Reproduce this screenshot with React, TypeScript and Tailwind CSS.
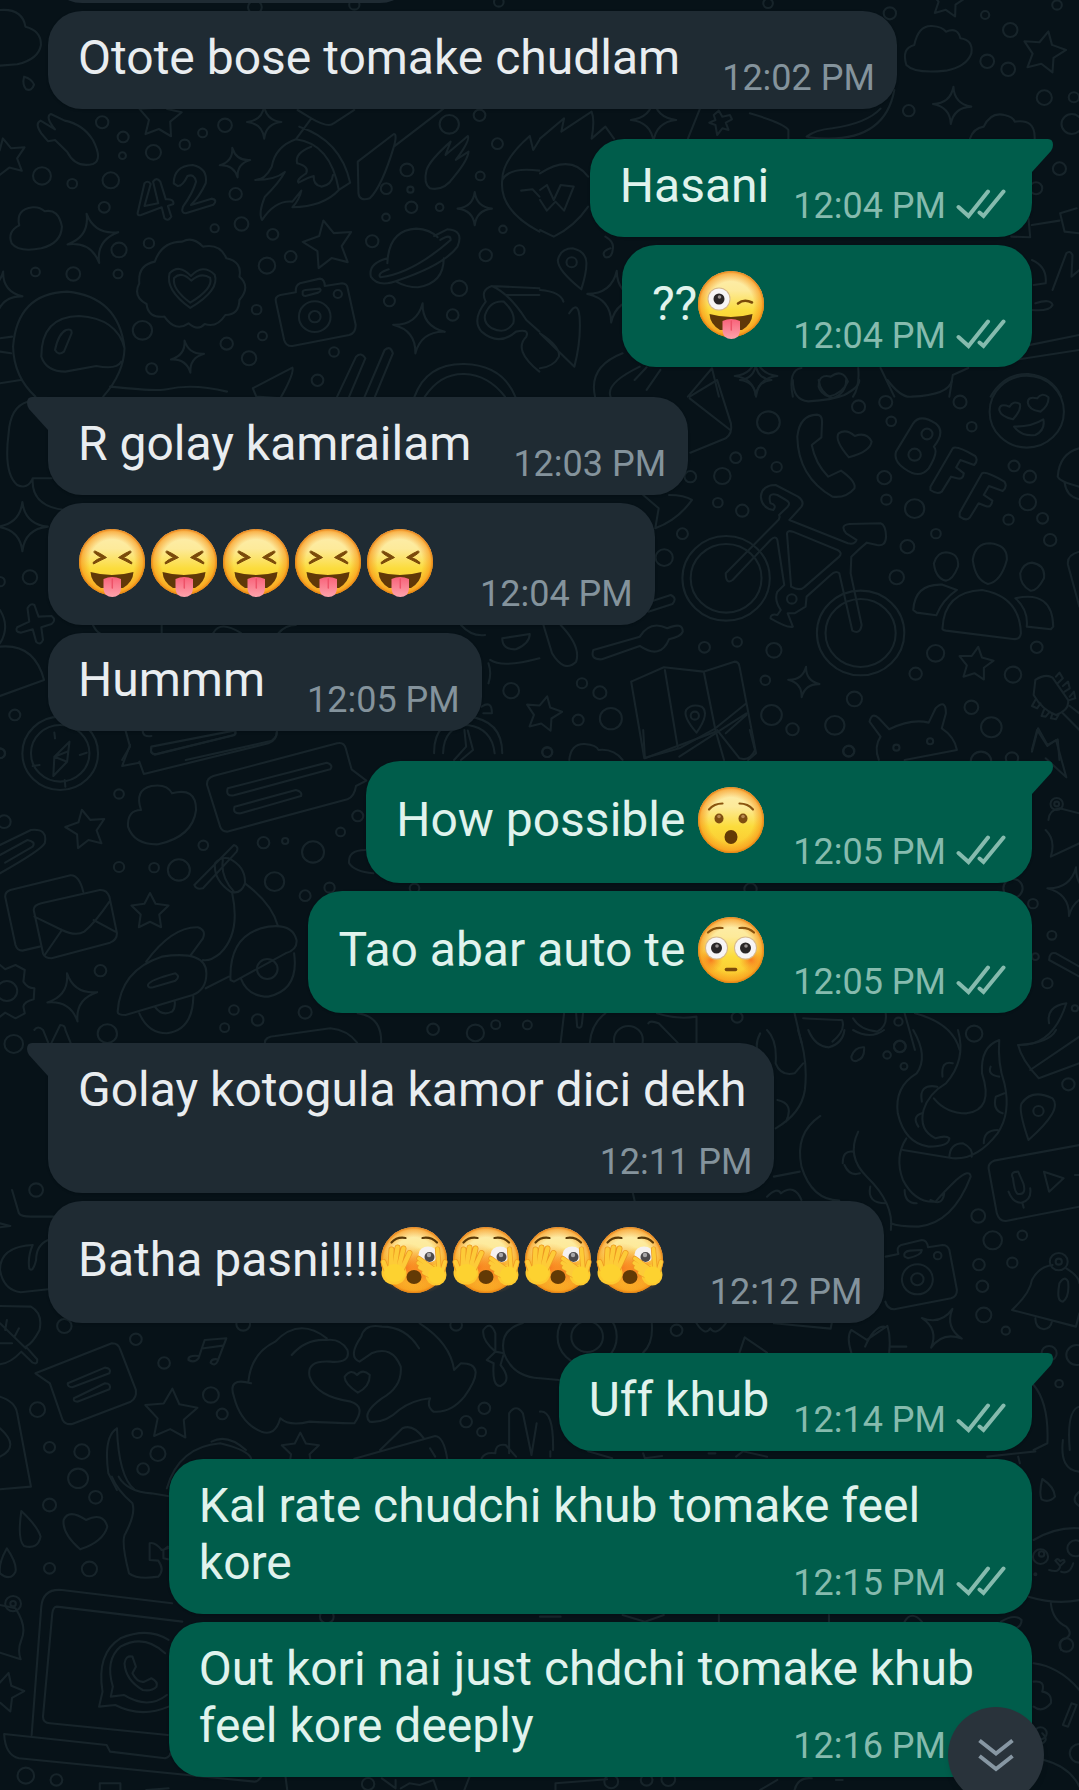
import React from "react";

type Dot = [number, number, number];
type Shape = [number, number, number, number];

interface Patch {
  at: [number, number];
  dots?: Dot[];
  stars?: Shape[];
  sparks?: Shape[];
  paths?: string[];
}

const STAR = "M0-10L3-4L10-3L5 2L6 9L0 6L-6 9L-5 2L-10-3L-3-4Z";
const SPARK = "M0-10Q1-1 10 0Q1 1 0 10Q-1 1-10 0Q-1-1 0-10Z";

// Wallpaper line art, grouped in tiles that are drawn at three times their size.
const wallpaper: Patch[] = [
  {
    at: [0, 0],
    dots: [
      [297, 367, 18], [358, 411, 16], [356, 467, 10], [446, 457, 22], [537, 434, 15], [589, 399, 13],
      [654, 376, 20], [122, 528, 26], [210, 551, 14], [322, 541, 24], [303, 622, 16], [685, 582, 18],
      [702, 672, 20], [624, 685, 12], [433, 730, 15], [346, 750, 22], [343, 822, 13], [213, 822, 20],
      [103, 816, 13], [793, 703, 16], [776, 797, 24], [845, 770, 17], [746, 929, 14], [763, 1008, 13],
      [659, 1031, 18], [724, 1075, 21], [414, 991, 28], [441, 1106, 16], [971, 1056, 14], [923, 1141, 17],
      [1306, 373, 28], [1394, 346, 17], [1446, 431, 16], [1183, 510, 19], [1123, 566, 16], [1193, 569, 9],
      [1196, 622, 17], [1278, 622, 11], [1396, 528, 13], [1122, 652, 11], [1082, 724, 18], [1412, 766, 18],
      [1462, 688, 11], [1510, 751, 15], [1335, 865, 23], [1132, 903, 16], [1316, 945, 17], [741, 22, 20],
      [1030, 14, 15], [1450, 6, 14], [915, 950, 46], [915, 950, 17], [982, 882, 12],
    ],
    stars: [[465, 350, 62, 5], [20, 470, 56, -12], [955, 732, 72, -12]],
    sparks: [
      [768, 366, 50, 0], [683, 488, 45, -10], [270, 715, 76, -14], [545, 1070, 49, -10],
      [1380, 626, 50, 0], [1218, 985, 76, 8], [0, 880, 66, 8],
    ],
    paths: [
      "M0 30Q65 25 74 80Q120 92 119 135Q112 178 50 193L0 197",
      "M70 230Q92 236 99 254Q92 275 76 268Q64 254 70 230Z",
      "M120 400Q100 370 118 362L160 388Q130 350 148 342L188 362Q240 372 270 420Q300 480 270 492Q220 505 195 455L160 420L140 424Z",
      "M400 640L420 550Q430 540 438 552L420 618L460 610L445 545Q455 530 466 545L482 598Q506 596 504 612L488 618L498 650Q488 666 478 655L470 622L410 645Q400 648 400 640Z",
      "M505 550Q505 498 560 495Q605 505 598 550Q580 590 555 615L615 596Q634 600 620 614L540 640Q525 640 532 620Q560 580 570 545Q565 520 545 528Q530 560 516 558Z",
      "M95 622Q45 628 56 676Q20 695 34 730Q55 758 120 745Q178 730 180 680Q170 625 130 634Q115 620 95 622Z",
      "M530 725Q560 708 590 740Q640 730 658 775Q705 785 696 830Q730 860 696 900Q695 945 655 945Q630 985 595 972Q575 995 548 970Q510 998 478 950Q430 955 426 912Q385 890 405 850Q400 795 450 785Q470 725 530 725Z",
      "M555 828Q520 790 493 820Q480 870 553 924Q640 870 624 824Q590 790 555 828ZM556 842Q528 812 506 834Q500 868 553 908Q620 866 611 834Q585 815 556 842Z",
      "M802 905Q798 890 815 885L860 877Q858 856 872 850L930 836Q944 838 944 858L995 850Q1008 852 1010 862L1034 975Q1034 1000 1015 1005L850 1038Q832 1040 826 1020ZM880 878Q878 888 888 888L925 878Q936 872 930 866L888 870Q878 872 880 878Z",
      "M1126 790Q1130 690 1210 686Q1250 688 1272 712M1290 775Q1290 850 1215 862Q1180 862 1152 845M1126 775Q1070 790 1078 830Q1100 865 1160 840Q1290 795 1330 740Q1350 690 1300 688L1262 708M1130 808Q1095 820 1106 832Q1200 820 1310 720Q1310 700 1280 720",
      "M860 418L905 355L865 330M905 355Q955 385 970 370L1030 330M870 380Q990 420 1018 548L985 570Q960 430 860 418Q800 440 790 500Q770 540 742 540Q800 540 828 516Q810 550 770 590Q750 640 762 660Q800 600 850 605L876 572Q870 600 850 622Q940 620 985 570M905 440Q855 460 864 490Q900 500 890 520Q860 540 868 548Q900 530 912 528Q910 555 935 560Q965 555 968 525M1040 485L1145 402Q1155 402 1145 440Q1110 560 1075 595Q1045 605 1042 580ZM1145 440L1290 325",
      "M1240 510Q1250 480 1310 425L1295 465L1360 408Q1368 420 1325 480L1362 455Q1360 480 1320 530Q1290 575 1250 565Q1230 550 1240 510Z",
      "M1460 540Q1460 480 1540 408L1550 450L1568 420M1460 540Q1480 500 1568 512M1460 540Q1450 630 1568 695M1515 572L1548 568L1568 590",
      "M103 1190Q40 1130 38 1040Q50 880 195 875Q345 890 362 1045Q360 1120 300 1190M120 1070Q120 950 230 948Q340 955 362 1045M120 1070Q135 1115 190 1115L280 1098Q340 1110 352 1085M160 1050Q170 1000 192 990Q210 985 208 1000L186 1055Q170 1068 160 1050M0 1015L35 1010M0 1055L32 1060M0 1150L60 1140M320 1160Q460 1175 485 1168Q560 1150 660 1175",
      "M735 1165L850 1103Q856 1120 815 1195L745 1190ZM980 1190L1035 1070Q1050 1055 1062 1075L1015 1190M1060 1190L1118 1050Q1135 1035 1142 1060L1090 1190M1205 1190Q1240 1090 1350 1092Q1460 1095 1498 1190M1235 1190Q1280 1120 1350 1122Q1420 1125 1468 1190",
      "M1430 858L1568 865M1430 858Q1395 870 1412 905Q1370 960 1400 995Q1450 1040 1500 995Q1540 985 1530 1010Q1490 1050 1568 1115M1430 858Q1480 880 1530 960L1568 995M1410 945Q1425 900 1465 905Q1500 940 1492 970Q1470 1005 1430 985Q1405 970 1410 945M1470 885L1568 885",
    ],
  },
  {
    at: [540, 0],
    dots: [
      [1017, 40, 18], [1294, 45, 12], [1367, 90, 21], [1300, 184, 20], [1361, 208, 20], [1466, 293, 22],
      [1552, 292, 15], [1072, 332, 17], [1546, 372, 30], [1503, 15, 14], [1510, 506, 19], [1442, 565, 18],
      [92, 787, 15], [663, 10, 14],
    ],
    stars: [[1185, 0, 50, 10], [1465, 155, 62, 12]],
    sparks: [[1198, 316, 56, 4], [330, 360, 66, 0], [215, 890, 78, 6], [628, 1128, 62, 0]],
    paths: [
      "M1065 195Q1050 145 1088 135Q1100 75 1140 78Q1170 80 1180 95Q1215 80 1222 115Q1260 120 1254 160Q1240 200 1180 212Q1090 222 1065 195Z",
      "M1250 416Q1260 385 1290 380Q1310 335 1350 345Q1375 350 1380 365Q1440 355 1438 416",
      "M0 416L70 355L62 395L150 335Q160 360 150 416L190 380L215 416M430 416L465 326M610 340Q710 370 722 390L722 416M775 410Q800 390 850 385Q950 370 990 326M780 412Q1000 440 1030 270",
      "M505 345L520 332L530 350L552 345L558 358L540 368L548 390L530 385L515 405L510 375L492 368L510 360Z",
      "M0 520Q90 460 140 530M140 620Q100 680 40 710L0 690M0 570L20 555L40 600L60 555L98 560L70 632L45 605L20 632L0 600M190 710Q215 725 212 745Q210 775 190 772Q175 755 205 745",
      "M120 868Q50 810 52 780Q60 745 95 745Q135 755 135 790Q135 820 120 868ZM0 870Q60 875 68 905M0 1000Q60 1040 55 1070Q40 1100 0 1105M85 940Q110 900 115 950Q120 1020 100 1100L0 1000",
      "M1430 675L1510 662M1512 640L1560 625M1512 640L1525 695L1568 700M1370 710L1425 712L1420 655M1490 870L1530 760Q1540 750 1548 765L1545 830L1568 810M1430 780Q1475 800 1470 850L1435 855M1440 910Q1485 895 1490 915Q1480 935 1430 930M1400 1040L1568 1005M1380 1080L1568 1050",
      "M160 1190Q140 1100 240 1060M205 1190Q190 1150 290 1100M275 1140L310 1102M310 1170L350 1110M430 1190L500 1105L520 1190M735 1190Q720 1110 760 1104M925 1104Q930 1160 910 1190M810 1160Q810 1120 845 1130Q880 1105 895 1145Q880 1180 840 1190Q815 1180 810 1160ZM990 1104L1030 1190M1245 1104L1200 1125L1190 1190M1310 1190Q1350 1120 1420 1122Q1490 1130 1515 1190",
    ],
  },
  {
    at: [0, 380],
    dots: [[87, 592, 21], [0, 605, 14], [43, 1005, 16], [1486, 932, 23], [0, 1120, 15], [175, 1120, 110], [175, 1120, 85]],
    sparks: [[65, 440, 74, 0]],
    paths: [
      "M100 675L112 710L150 708Q165 720 150 732L120 742L125 780Q118 798 105 785L95 748L60 758Q42 755 50 742L85 725L80 685Q88 668 100 675Z",
      "M80 65Q30 80 25 160Q10 280 50 315Q80 330 95 295M95 295L150 295M95 295Q90 380 190 390M0 800Q100 790 128 900L0 948M0 690Q30 740 0 790",
      "M270 735Q280 755 290 760M470 735L470 759M620 759Q640 720 700 759M810 759Q830 735 860 735M1340 735Q1370 770 1410 765M1460 775Q1460 810 1500 808Q1540 790 1540 762ZM1425 840Q1460 865 1568 835M1420 850Q1430 880 1420 910M1400 980Q1430 960 1430 1000L1405 1000",
      "M1262 1120Q1260 1020 1360 1010Q1460 1020 1460 1120M1288 1120Q1290 1040 1360 1035Q1430 1045 1438 1120M1350 1050L1355 1100L1320 1140M1360 1052L1375 1110L1340 1140M365 1052L378 1100L355 1140M415 1052Q415 1072 440 1068M440 1100L680 1052Q690 1060 680 1066L450 1124Q435 1120 440 1100M805 1052Q805 1080 780 1085L540 1140",
    ],
  },
  {
    at: [540, 380],
    dots: [
      [926, 80, 19], [1005, 67, 19], [1021, 124, 14], [1221, 66, 19], [1255, 140, 14], [664, 127, 33],
      [569, 233, 16], [641, 218, 15], [688, 261, 15], [530, 288, 24], [437, 290, 17], [517, 368, 14],
      [588, 392, 18], [414, 461, 16], [361, 533, 25], [1001, 293, 20], [1007, 359, 15], [1089, 386, 28],
      [1151, 461, 14], [1068, 500, 20], [1037, 592, 21], [1378, 258, 16], [1424, 290, 18], [1418, 367, 24],
      [1362, 419, 15], [1461, 415, 16], [1483, 480, 18], [478, 802, 16], [573, 786, 14], [680, 811, 22],
      [1150, 820, 25], [1092, 881, 18], [1444, 802, 17], [1375, 884, 24], [914, 957, 22], [1254, 982, 20],
      [1312, 1042, 30], [857, 1036, 28], [898, 1113, 16], [734, 1048, 18], [673, 1005, 30], [655, 901, 14],
      [122, 910, 15], [174, 938, 19], [111, 1020, 16], [206, 1016, 32], [21, 1116, 15], [1415, 95, 108],
      [541, 595, 127], [541, 595, 103], [932, 759, 127], [932, 759, 102], [732, 657, 14], [1125, 162, 16],
      [1089, 224, 18], [450, 1007, 12], [1036, 1103, 9], [1134, 1084, 9],
    ],
    stars: [[1267, 850, 50, 8], [10, 1000, 52, 12]],
    sparks: [[767, 906, 46, 8], [627, 0, 46, 0]],
    paths: [
      "M435 50L515 0L555 130Q560 160 540 175L437 218M435 55L553 150",
      "M735 0Q735 60 780 64Q850 60 885 45Q930 20 928 0M810 0Q815 40 850 55Q890 40 890 0M1010 0Q1050 55 1080 50Q1190 45 1198 0",
      "M748 170Q755 105 805 104Q820 105 820 125L818 172L790 195Q800 250 838 290L875 272Q920 305 914 325Q890 355 850 350Q750 290 748 170ZM898 232Q855 180 868 160Q890 145 915 168Q950 155 964 185Q960 215 898 232Z",
      "M1035 215L1085 130Q1105 100 1150 130Q1180 155 1145 200Q1160 215 1130 265Q1110 290 1080 278Q1025 250 1035 215ZM1135 320L1200 205Q1210 195 1265 228Q1275 240 1262 255L1222 240L1210 262L1232 280Q1230 300 1212 295L1195 290L1168 335Q1155 345 1135 330ZM1220 398L1285 280Q1295 272 1350 305Q1360 320 1345 333L1305 318L1290 345L1315 362Q1312 385 1295 378L1275 370L1250 412Q1240 425 1220 410Z",
      "M1335 90Q1335 68 1365 80Q1375 60 1395 72Q1400 90 1375 118Q1340 110 1335 90ZM1418 68Q1418 48 1445 55Q1460 35 1478 52Q1480 75 1455 95Q1420 90 1418 68ZM1378 140Q1430 140 1463 118Q1470 150 1440 165Q1400 170 1378 140Z",
      "M540 580L688 425Q700 415 695 405L720 380Q730 368 715 360L690 345Q660 335 670 370Q690 375 678 390Q645 385 642 350Q645 315 685 315L750 350Q770 365 760 380L725 420L895 490Q915 495 920 480L890 460Q870 435 900 432L990 430Q1005 435 1006 470Q1005 500 980 495L950 488Q930 505 905 530L903 580L935 735Q930 765 908 752L870 580Q860 570 845 585L775 650L772 680L740 700L720 700L735 740Q720 745 670 715Q670 700 690 705L700 690Q680 660 690 635L710 615L690 480Q685 465 670 480L560 600Q540 615 540 580ZM718 460L730 620Q755 635 770 620L870 530Q880 518 865 510L735 455Q720 450 718 460Z",
      "M1180 517Q1220 520 1215 560Q1200 600 1180 602Q1150 595 1145 550Q1155 517 1180 517ZM1308 490Q1360 495 1357 540Q1340 605 1302 612Q1265 600 1258 540Q1265 490 1308 490ZM1430 548Q1470 555 1465 595Q1445 635 1425 632Q1395 615 1396 580Q1405 550 1430 548ZM1170 745Q1175 635 1285 630Q1395 650 1398 760Q1395 780 1375 777L1180 752Q1168 750 1170 745ZM1085 690Q1090 610 1170 614L1212 630Q1170 660 1152 706L1095 698ZM1382 655Q1490 630 1492 740L1485 748L1415 740Q1420 690 1382 655Z",
      "M155 810L290 770Q320 720 370 745Q415 725 415 755Q410 770 375 778Q350 840 290 798L180 838Q145 840 155 810ZM320 665L380 645Q400 655 385 672L315 695M300 345L345 385L335 445Q400 420 442 360Q420 345 375 345M60 735Q120 800 105 845Q70 880 35 820L10 735",
      "M265 905L360 862L475 875L565 845Q578 845 580 860L628 1120L605 1140M265 905L303 1134L405 1105L510 1045L600 970M405 1130L600 1000M363 870L400 1100M477 880L510 1050L535 1140M455 1058Q415 1010 425 990Q440 970 470 980Q495 1000 455 1058ZM540 1060L600 1005",
      "M985 1140Q970 1100 990 1070L958 1025Q965 995 985 1015L1015 1048Q1080 1015 1130 1028L1150 985Q1180 955 1180 1000L1168 1045Q1205 1070 1212 1110L1060 1140",
      "M1440 900Q1470 880 1490 893L1535 960Q1540 990 1500 1005Q1460 990 1435 945ZM1500 890L1510 878L1520 895L1505 910M1520 918L1535 905L1540 925L1525 935M1540 950L1552 935L1556 955L1540 960M1440 960L1430 978L1445 985L1455 970M1465 990L1458 1008L1470 1010L1482 995M1490 1000L1485 1015L1500 1018L1508 1003M1520 1000L1568 1050M1540 978L1568 1000M1430 1115L1448 1045L1475 1095L1505 1078L1510 1140",
      "M1505 290Q1510 220 1568 205M1505 290Q1510 305 1568 320M1525 308Q1530 350 1568 358M1568 515Q1530 525 1535 555L1568 680",
    ],
  },
  {
    at: [0, 730],
    dots: [
      [346, 192, 14], [12, 275, 19], [346, 411, 15], [448, 413, 14], [520, 420, 32], [591, 346, 14],
      [766, 338, 17], [829, 333, 9], [910, 366, 32], [798, 455, 28], [887, 497, 16], [958, 473, 15],
      [1040, 258, 16], [990, 306, 13], [292, 722, 17], [680, 840, 14], [749, 870, 17], [887, 847, 19],
      [653, 893, 13], [312, 911, 28], [1259, 898, 17], [1382, 909, 25], [1441, 884, 13], [1533, 885, 13],
      [40, 942, 27], [0, 70, 14], [20, 783, 30], [1205, 475, 14], [777, 717, 30],
    ],
    stars: [[250, 296, 58, -12], [436, 543, 54, 0]],
    sparks: [[210, 802, 74, -12]],
    paths: [
      "M158 8L160 25M190 170L188 150M95 108L115 105M232 75L252 68M155 138L158 80L202 35L195 95ZM158 80L195 95M158 80L195 65",
      "M405 95L418 132L780 40Q805 30 805 5M378 45L355 108L405 98M440 55Q435 75 455 72L680 15Q690 5 680 0",
      "M602 165Q600 145 620 138L980 40Q1000 35 1005 55L1022 118L1065 152L1035 168Q1030 200 1010 208L660 305Q645 305 640 290ZM662 175L950 98Q970 105 960 118L680 196Q655 200 662 175ZM682 230L860 180Q880 185 875 198L700 250Q675 252 682 230Z",
      "M410 240Q390 180 440 168Q485 160 500 190Q570 170 570 240Q560 320 460 343Q390 345 372 290Q370 240 410 240Z",
      "M0 345L90 300Q140 295 130 340Q120 360 0 430M0 375L80 330Q105 335 95 350L15 398",
      "M115 650L65 662Q50 662 45 645L15 500Q15 485 30 480L205 436Q230 435 242 485M98 540Q98 525 120 520L290 480Q310 478 318 500L340 610Q340 630 320 638L150 685Q130 685 125 670ZM100 560L180 600Q220 620 245 605Q275 580 318 515M180 600L130 675M272 570L335 605",
      "M565 465L680 345Q695 350 688 365L590 475Q570 480 565 465ZM625 400Q640 380 665 385Q715 410 712 460Q700 495 670 485Q620 450 625 400M648 390Q640 440 680 485M675 490Q700 610 640 670Q610 695 590 690M712 460Q790 520 808 588M670 750Q665 610 780 590Q850 580 862 630Q865 660 830 670L680 755ZM855 670Q870 780 780 800Q720 800 700 745M425 695Q500 590 575 592Q600 600 590 625L555 675M342 845Q350 720 470 680Q600 660 600 730Q600 780 560 795L365 855Q342 855 342 845ZM598 775L665 740M405 850Q430 910 485 910Q560 900 562 800M430 765Q435 750 510 730Q525 740 510 752L445 772Q430 775 430 765M450 830Q470 860 500 845Q510 835 508 815",
      "M0 705L15 718L45 705L72 720L68 755Q80 775 100 775L98 808Q70 815 68 830L72 850L45 865L15 848L0 860",
      "M100 900Q110 885 125 900L140 938M150 938L175 885Q190 885 190 900L205 938M770 938Q770 920 800 918L960 895Q1010 900 1038 938M1040 850Q1110 860 1108 938M1015 400Q1010 360 1062 360M1015 400Q1030 425 1085 430",
    ],
  },
  {
    at: [540, 730],
    dots: [
      [21, 67, 14], [897, 64, 16], [1502, 222, 18], [1502, 222, 7], [1433, 521, 14], [1488, 616, 13],
      [1475, 760, 15], [1440, 680, 10], [573, 862, 16], [1042, 875, 12], [1262, 911, 24], [1046, 950, 17],
      [1375, 475, 28], [1282, 95, 30], [1372, 85, 18], [257, 930, 42], [612, 478, 18], [1555, 835, 9],
    ],
    sparks: [[1548, 485, 74, 8]],
    paths: [
      "M85 90Q90 40 130 42Q165 45 170 60Q215 55 240 90M300 0L305 85L510 5M515 0L580 85Q610 95 625 60L610 0M1430 60L1445 0L1475 48L1500 30L1530 142L1470 85",
      "M1478 270Q1480 240 1510 235L1568 250M1470 300Q1500 330 1485 380L1568 340M1480 690Q1480 665 1500 670L1568 710M1480 690L1568 740",
      "M60 938L70 850M105 850L108 890Q120 900 122 880L125 850M145 938Q150 880 190 850M340 850Q400 870 455 860L455 938M315 880Q320 870 345 880L400 938M740 850L760 938M765 865Q850 870 878 870Q890 900 850 935M1005 850Q1010 890 980 905Q930 900 910 865M1060 850L1090 960M1090 850Q1200 880 1220 960M1480 880Q1470 830 1530 820M1530 820Q1490 950 1390 945",
    ],
  },
  {
    at: [540, 1030],
    dots: [
      [1046, 49, 17], [1009, 75, 11], [1058, 109, 10], [1536, 163, 18], [1449, 243, 15], [1274, 558, 20],
      [1316, 631, 27], [1402, 616, 14], [1276, 704, 17], [1373, 698, 15], [1286, 769, 17], [1290, 855, 22],
      [1354, 902, 12], [397, 901, 17], [137, 920, 46], [137, 920, 86], [1509, 1061, 11], [1097, 748, 45],
      [1097, 748, 18], [1156, 677, 11], [1508, 695, 26], [1508, 695, 9], [1560, 975, 30], [1480, 970, 22],
    ],
    sparks: [[1168, 895, 66, 28]],
    paths: [
      "M905 80Q915 50 942 52Q945 85 920 93Q905 95 905 80ZM780 0Q800 50 840 52Q880 40 885 0M910 0Q960 30 1000 0M640 10Q620 50 640 80M660 0Q690 30 685 100Q700 140 740 130L765 100M750 0Q780 90 770 180Q760 250 685 295M690 210Q740 220 715 275",
      "M815 258Q740 310 760 410Q790 510 870 512M925 305Q890 380 950 440Q1030 520 1020 600M1085 0Q1130 80 1095 130Q1030 170 1040 250Q1060 340 1130 350Q1190 350 1190 325Q1180 315 1150 325Q1100 300 1115 240Q1130 190 1180 160Q1240 90 1215 0M1335 30Q1280 50 1285 130Q1320 240 1240 250Q1180 250 1145 205M1335 30Q1330 100 1350 160Q1370 250 1330 310Q1270 390 1200 385L1055 360M1065 325Q1030 380 1055 450Q1090 520 1150 515Q1170 490 1210 450Q1250 415 1252 440Q1200 580 1100 590Q1040 590 1020 580M880 400Q880 360 910 365M885 405Q900 440 930 430M960 470Q950 520 1005 520M1060 480Q1060 520 1095 520M1135 510Q1170 530 1175 490M1190 385Q1190 340 1230 340Q1260 355 1255 380M1290 340Q1290 300 1330 300M1345 250Q1315 240 1325 200L1350 190M1335 140Q1300 135 1310 110M1200 100Q1165 90 1170 140M1110 215Q1100 160 1155 170M1110 250Q1080 260 1100 290",
      "M1390 45Q1480 40 1500 0M1390 45Q1400 90 1450 145L1568 100M1425 120L1568 20M1420 330Q1390 240 1400 220Q1430 175 1490 205Q1520 240 1420 330ZM1568 345L1320 392Q1300 400 1305 420L1328 550Q1335 575 1355 573L1568 530M1375 445Q1365 425 1390 425L1405 460Q1415 495 1390 492Q1380 490 1375 445M1362 485Q1375 520 1400 518Q1430 510 1425 475M1402 518L1406 533M1465 425L1522 445L1480 485ZM1555 435L1568 435",
      "M1005 680L1042 672Q1035 650 1050 645L1110 630Q1125 630 1128 652L1170 645Q1185 645 1190 660L1212 780Q1212 800 1195 805L1030 838Q1010 838 1004 815M1060 680Q1055 665 1075 662L1110 660Q1110 675 1070 685ZM1372 840Q1425 790 1430 750Q1450 710 1490 705M1372 840L1558 890L1568 850M1530 715Q1568 740 1568 760M1440 865Q1440 895 1465 898Q1485 895 1488 875M1510 760Q1525 735 1535 755Q1540 800 1520 815Q1500 815 1510 760Z",
      "M660 500Q690 470 700 490Q740 460 760 510M680 440L755 425M270 490L275 512M325 880Q330 940 300 968M455 880Q480 920 495 895Q510 920 540 880M580 968L595 922L660 968M905 968Q890 920 905 900L950 930L1010 888Q1020 920 1015 968M945 950Q970 890 1000 890M1020 950L1065 950M680 880L845 896L848 880M1435 1065Q1480 1120 1475 1240L1435 1260M0 1045L55 1050M0 1145Q40 1140 38 1260M1540 1260Q1530 1140 1568 1130",
    ],
  },
  {
    at: [0, 1190],
    dots: [
      [187, 408, 21], [395, 448, 17], [477, 519, 17], [613, 615, 23], [646, 672, 16], [109, 659, 22],
      [399, 730, 14], [144, 772, 16], [238, 785, 22], [459, 791, 22], [416, 837, 17], [227, 865, 29],
      [1408, 655, 17], [1355, 695, 17], [1400, 726, 13], [1326, 405, 17], [707, 402, 20], [105, 0, 20],
    ],
    stars: [[497, 672, 76, 3], [873, 782, 54, 0]],
    paths: [
      "M35 0L55 70Q60 80 90 80L155 80M0 100L30 108L0 112M140 150Q105 165 105 210Q95 250 85 235Q80 200 95 165Q0 170 0 240Q10 300 60 307L140 298",
      "M0 348L90 350Q125 370 115 420Q95 460 75 470L108 508Q110 525 95 518L62 485Q30 520 0 523M0 400L75 475M20 390L15 420M55 415L42 440M0 460L35 460",
      "M103 550L325 460Q345 460 350 480L395 600Q398 625 380 635L210 702Q190 705 182 690L145 580ZM197 580L305 533Q325 535 318 550L210 592Q195 590 197 580ZM215 625L305 580Q325 580 318 598L225 635Q212 635 215 625Z",
      "M595 450L658 445L632 515Q625 530 612 518Q615 505 632 508M595 450L577 505Q565 520 548 510Q545 495 577 498M592 475L648 467",
      "M730 580Q660 560 680 620Q700 700 760 725Q800 740 815 685Q840 710 900 695Q1000 700 1030 700Q1065 650 1020 635Q920 620 900 560Q890 510 960 515Q1020 520 1010 480Q990 445 950 450Q890 445 848 495M722 575Q730 490 800 455Q870 380 950 445M1050 440Q1060 400 1110 410Q1180 410 1218 475M1050 440Q1010 500 1045 515L1080 490Q1140 465 1165 530Q1170 590 1110 625Q1050 670 1075 695Q1120 700 1160 660Q1200 630 1250 625Q1240 650 1260 665Q1310 670 1350 620Q1420 520 1340 520L1320 540Q1310 460 1220 400M1040 608Q1000 580 1002 560Q1020 535 1038 555Q1055 535 1075 555Q1075 590 1040 608Z",
      "M1405 420Q1425 390 1440 430L1440 485L1415 510L1435 520Q1430 590 1455 588Q1490 570 1455 525L1465 490L1440 485Q1400 450 1405 420M1465 490Q1450 420 1520 399M1465 490Q1490 560 1568 565M1480 790L1480 670Q1500 640 1520 670L1545 795L1560 700M1400 805Q1410 785 1440 790Q1440 760 1470 765L1500 800",
      "M340 715Q300 740 315 850L340 900M340 715Q345 860 390 898M485 895Q520 770 640 760Q720 780 730 805M615 755Q660 730 715 780M1030 806L1265 738Q1290 740 1300 806M1250 775L1265 800M1105 780L1170 715Q1200 700 1232 745M0 620Q45 635 50 670L90 890L0 898M0 715Q60 770 0 800",
    ],
  },
  {
    at: [0, 1440],
    dots: [
      [144, 385, 16], [260, 387, 22], [144, 195, 19], [278, 172, 19],
      [38, 491, 23], [38, 491, 8], [75, 1007, 24], [164, 1020, 17], [1070, 1032, 18], [950, 530, 20],
    ],
    stars: [[10, 755, 58, 15]],
    paths: [
      "M62 213Q50 300 70 318Q110 330 118 290Q110 260 62 213ZM20 325Q-5 370 0 400Q30 425 45 395Q50 370 20 325ZM233 328Q180 280 185 240Q200 205 250 240Q300 215 312 260Q300 305 233 328Z",
      "M325 110Q340 150 385 190Q395 220 365 280Q350 300 375 400Q400 420 460 410Q480 390 460 362L435 360L435 310Q450 305 470 330L488 325M345 110Q370 155 440 160L488 168M488 320L475 330L475 355L488 358",
      "M530 545L165 500Q155 500 152 520L125 830Q125 848 145 850L488 885M500 490L180 450Q125 445 120 500L92 885M12 882L310 915L320 935L480 955Q495 950 495 940M12 882Q15 945 55 955L740 1025Q750 1025 760 1010",
      "M288 800L298 755Q280 640 350 595Q430 560 490 600M288 800L335 795Q410 835 490 800M322 770L328 740Q305 660 350 620Q420 580 480 640M322 770L360 765Q430 810 485 765M362 670Q365 645 385 650L395 680L385 700Q400 730 420 725L440 715Q460 725 455 740Q440 755 415 750Q365 720 362 670Z",
      "M0 495L45 505Q80 560 62 600Q50 630 60 658L0 638M290 1050L290 1030L350 1030L350 1050M425 1050L490 1045M830 1010L835 1050M1110 1015L1150 1045L1150 1020M1165 1045L1190 1030L1220 1035L1260 1020L1270 1050M1365 1010L1350 1050",
    ],
  },
  {
    at: [540, 1440],
    dots: [
      [1455, 350, 22], [1557, 325, 24], [1458, 342, 8], [1440, 403, 3], [1455, 880, 18], [207, 1025, 20],
      [310, 1020, 17], [373, 1018, 20], [1568, 940, 28], [1530, 615, 20],
    ],
    paths: [
      "M1460 117Q1450 160 1458 178Q1480 190 1497 170Q1495 140 1460 117ZM1568 155Q1540 180 1568 198M1520 0Q1510 90 1568 95M1435 300Q1500 260 1568 265M1420 470Q1500 495 1568 480M1485 490Q1490 540 1530 560Q1550 580 1530 595Q1505 600 1515 630M1498 362Q1505 352 1512 364Q1525 355 1525 365L1512 378ZM1512 378Q1510 400 1480 390M1515 395Q1540 405 1550 370",
      "M30 50L30 34M140 34L210 55M300 40L305 55L355 48M490 40L510 40M570 50L590 34L660 50M1300 50L1440 34M1390 50L1395 70M0 530L60 530M240 525L305 545L360 525M520 545L520 525M840 525L840 545M1060 545Q1080 510 1110 545M1340 545Q1380 520 1400 540Q1400 560 1380 565",
      "M1435 670Q1510 680 1568 750M1435 725Q1470 720 1460 755Q1490 760 1485 790Q1460 820 1435 800M1520 855L1545 790L1560 795L1535 860ZM1460 880Q1480 900 1460 910M45 1050L45 1030L195 1018M640 1050L690 1020M740 1050Q750 1010 790 1015M860 1020L880 1020M1465 960Q1540 980 1568 1040",
    ],
  },
];

function Wallpaper() {
  return (
    <svg
      className="pointer-events-none absolute inset-0 h-full w-full"
      viewBox="0 0 1079 1790"
      preserveAspectRatio="xMidYMin slice"
      fill="none"
      stroke="#17242a"
      strokeWidth="2.1"
      strokeLinecap="round"
      strokeLinejoin="round"
      aria-hidden="true"
    >
      {wallpaper.map((patch, i) => (
        <g key={i} transform={`translate(${patch.at[0]} ${patch.at[1]}) scale(.344 .3333)`}>
          {patch.dots?.map(([x, y, r], k) => (
            <circle key={k} cx={x} cy={y} r={r} vectorEffect="non-scaling-stroke" />
          ))}
          {patch.stars?.map(([x, y, r, a], k) => (
            <path key={k} d={STAR} transform={`translate(${x} ${y}) rotate(${a}) scale(${r / 10})`} vectorEffect="non-scaling-stroke" />
          ))}
          {patch.sparks?.map(([x, y, r, a], k) => (
            <path key={k} d={SPARK} transform={`translate(${x} ${y}) rotate(${a}) scale(${r / 10})`} vectorEffect="non-scaling-stroke" />
          ))}
          {patch.paths?.map((d, k) => (
            <path key={k} d={d} vectorEffect="non-scaling-stroke" />
          ))}
        </g>
      ))}
    </svg>
  );
}

type EmojiName = "wink" | "squint" | "hushed" | "flushed" | "peek";

const emojiLabels: Record<EmojiName, string> = {
  wink: "Winking face with tongue",
  squint: "Squinting face with tongue",
  hushed: "Hushed face",
  flushed: "Flushed face",
  peek: "Face with peeking eye",
};

function EmojiDefs() {
  return (
    <svg className="absolute h-0 w-0" aria-hidden="true">
      <defs>
        <linearGradient id="face" x1="0" y1="0" x2="0" y2="1">
          <stop offset="0" stopColor="#fdeeb0" />
          <stop offset=".3" stopColor="#fdea9a" />
          <stop offset=".6" stopColor="#fbdc3c" />
          <stop offset="1" stopColor="#fcc32c" />
        </linearGradient>
        <radialGradient id="rim">
          <stop offset=".68" stopColor="#f7981d" stopOpacity="0" />
          <stop offset=".92" stopColor="#f7981d" stopOpacity=".65" />
          <stop offset="1" stopColor="#e57a10" />
        </radialGradient>
        <radialGradient id="blush">
          <stop offset="0" stopColor="#f76b1c" stopOpacity=".85" />
          <stop offset="1" stopColor="#f98a1c" stopOpacity="0" />
        </radialGradient>
        <linearGradient id="tongue" x1="0" y1="0" x2="0" y2="1">
          <stop offset="0" stopColor="#f9627a" />
          <stop offset="1" stopColor="#fda3ac" />
        </linearGradient>
      </defs>
    </svg>
  );
}

function TongueMouth() {
  return (
    <>
      <path d="M14.5 46Q36 52 57.500 46Q57 56 47 62H25Q15 56 14.500 46Z" fill="#603808" />
      <path d="M27.500 53Q36 49 45 53V63Q44 71 36.300 71Q28.500 71 27.500 63Z" fill="url(#tongue)" />
      <path d="M36.300 53V62" stroke="#ee5268" strokeWidth="1.500" />
    </>
  );
}

function BigEye({ x, y }: { x: number; y: number }) {
  return (
    <>
      <circle cx={x} cy={y} r="11.500" fill="#d7b98c" />
      <circle cx={x} cy={y} r="10.500" fill="#f7f5f5" />
      <circle cx={x} cy={y} r="5.500" fill="#2a2626" />
      <circle cx={x + 0.5} cy={y - 2} r="1.800" fill="#97908e" />
    </>
  );
}

const LEFT_FINGERS = "M12.500 45L13.500 25.500M16 46L19.500 23.500M20 46L25.500 24.500M22 49L31.500 29M10 50L5.500 38";
const RIGHT_FINGERS = "M57 46L41 34.500M56 49L40.500 39M56 51L42 43.500M56 54L46 48.500M61 46L59.500 25M63 51L67 38";

function Emoji({ name }: { name: EmojiName }) {
  return (
    <svg className="h-[72px] w-[72px] shrink-0" viewBox="2 0 72 72" fill="none" strokeLinecap="round" role="img" aria-label={emojiLabels[name]}>
      <circle cx="36" cy="36" r="33" fill="url(#face)" />
      <circle cx="36" cy="36" r="33" fill="url(#rim)" />
      {name === "wink" && (
        <>
          <TongueMouth />
          <BigEye x={24} y={31} />
          <path d="M43 35.500Q49 30.500 57 34.500" stroke="#7a4a0a" strokeWidth="2.600" />
        </>
      )}
      {name === "squint" && (
        <>
          <TongueMouth />
          <path d="M19 25Q24 27 30.500 31.500Q24 34.500 17.500 38L17 36.500Q21 33 25.500 31.500Q21 29.500 18 26.500Z" fill="#7a4a0a" stroke="#7a4a0a" />
          <path d="M54 25Q49 27 42.500 31.500Q49 34.500 55.500 38L56 36.500Q52 33 47.500 31.500Q52 29.500 55 26.500Z" fill="#7a4a0a" stroke="#7a4a0a" />
        </>
      )}
      {name === "hushed" && (
        <>
          <path d="M14 25.500Q19 19.500 27.500 19.500M44.500 19.500Q53 19.500 58 25.500" stroke="#8a540e" strokeWidth="2.200" />
          <ellipse cx="24" cy="34.500" rx="4.500" ry="5" fill="#7f4e10" />
          <ellipse cx="48" cy="34.500" rx="4.500" ry="5" fill="#7f4e10" />
          <circle cx="24" cy="32.500" r="1.800" fill="#b98a50" />
          <circle cx="48" cy="32.500" r="1.800" fill="#b98a50" />
          <ellipse cx="36" cy="53" rx="6.500" ry="7" fill="#633a05" />
        </>
      )}
      {name === "flushed" && (
        <>
          <circle cx="16" cy="46" r="12" fill="url(#blush)" />
          <circle cx="56" cy="46" r="12" fill="url(#blush)" />
          <path d="M13 18.500Q19 13 27.500 14M44.500 14Q53 13 59 18.500" stroke="#8a540e" strokeWidth="2.200" />
          <BigEye x={21.5} y={34} />
          <BigEye x={50.5} y={34} />
          <path d="M31.500 55.500H40.500" stroke="#7a4a0a" strokeWidth="3.600" />
        </>
      )}
      {name === "peek" && (
        <>
          <circle cx="28" cy="44" r="25" fill="url(#blush)" />
          <circle cx="46" cy="46" r="23" fill="url(#blush)" />
          <path d="M13.500 18.500Q19 12.500 27.500 14M44.500 14Q53 12.500 59 18.500" stroke="#5a3a08" strokeWidth="2.200" />
          <ellipse cx="50" cy="30.500" rx="9.500" ry="8" fill="#f5f1f0" />
          <circle cx="51.500" cy="33" r="5" fill="#4d4a4c" />
          <circle cx="51" cy="31" r="2.200" fill="#a8a6a8" />
          <ellipse cx="36" cy="53" rx="7.500" ry="7" fill="#633a05" />
          <ellipse cx="16" cy="49" rx="12.500" ry="11.500" fill="#fdc92f" />
          <path d={LEFT_FINGERS} stroke="#ee9a22" strokeWidth="6" />
          <path d={LEFT_FINGERS} stroke="#fdcb38" strokeWidth="4.400" />
          <ellipse cx="16.500" cy="49" rx="10.500" ry="9" fill="#fdd230" />
          <ellipse cx="58" cy="51" rx="10.500" ry="10.500" fill="#fdc92f" />
          <path d={RIGHT_FINGERS} stroke="#ee9a22" strokeWidth="5.200" />
          <path d={RIGHT_FINGERS} stroke="#fdcb38" strokeWidth="3.800" />
          <ellipse cx="58.500" cy="51" rx="8.500" ry="8.500" fill="#fdd230" />
        </>
      )}
    </svg>
  );
}

function Ticks() {
  return (
    <svg className="mb-2 ml-[10px] h-[31px] w-[50px]" viewBox="0 0 50 31" fill="none" stroke="currentColor" strokeWidth="4" strokeLinecap="round" role="img" aria-label="Delivered">
      <path d="M2.500 19L12.500 28L32 3.500" />
      <path d="M23.500 24.500L27.500 28L47.500 3.500" />
    </svg>
  );
}

interface Message {
  text?: string;
  lastLine?: string;
  emoji?: EmojiName;
  count?: number;
  time: string;
  mine?: boolean;
  first?: boolean;
  layout?: "inline" | "stacked" | "wide";
}

const messages: Message[] = [
  { text: "Otote bose tomake chudlam", time: "12:02 PM" },
  { text: "Hasani", time: "12:04 PM", mine: true, first: true },
  { text: "??", emoji: "wink", time: "12:04 PM", mine: true },
  { text: "R golay kamrailam", time: "12:03 PM", first: true },
  { emoji: "squint", count: 5, time: "12:04 PM" },
  { text: "Hummm", time: "12:05 PM" },
  { text: "How possible ", emoji: "hushed", time: "12:05 PM", mine: true, first: true },
  { text: "Tao abar auto te ", emoji: "flushed", time: "12:05 PM", mine: true },
  { text: "Golay kotogula kamor dici dekh", time: "12:11 PM", first: true, layout: "stacked" },
  { text: "Batha pasni!!!!", emoji: "peek", count: 4, time: "12:12 PM" },
  { text: "Uff khub", time: "12:14 PM", mine: true, first: true },
  { text: "Kal rate chudchi khub tomake feel", lastLine: "kore", time: "12:15 PM", mine: true, layout: "wide" },
  { text: "Out kori nai just chdchi tomake khub", lastLine: "feel kore deeply", time: "12:16 PM", mine: true, layout: "wide" },
];

function Tail({ mine }: { mine?: boolean }) {
  return (
    <svg
      className={mine ? "absolute top-0 left-full h-[33px] w-[21px]" : "absolute top-0 right-full h-[33px] w-[21px] -scale-x-100"}
      viewBox="0 0 21 33"
      fill="currentColor"
      aria-hidden="true"
    >
      <path d="M0 0H16Q21 0 21 6Q21 9 19 12L0 33Z" />
    </svg>
  );
}

function Stamp({ time, mine }: { time: string; mine?: boolean }) {
  return (
    <div className={`flex items-end self-end pb-[10px] text-4xl/[42px] whitespace-nowrap ${mine ? "text-[#86bbae]" : "text-[#84939c]"}`}>
      <time>{time}</time>
      {mine && <Ticks />}
    </div>
  );
}

function Bubble({ message }: { message: Message }) {
  const { text, lastLine, emoji, count = 1, time, mine, first, layout = "inline" } = message;
  const tone = mine ? "bg-[#005d4b] mr-[47px]" : "bg-[#1f2b33] ml-12";
  const corner = first ? (mine ? "rounded-tr-none" : "rounded-tl-none") : "";
  const arrange = layout === "wide" ? "w-4/5" : layout === "stacked" ? "flex flex-col" : "flex items-end";
  const textGap = layout === "inline" ? (mine ? "pr-6" : "pr-[42px]") : "pr-[6px]";
  const ink = mine ? "text-[#e0f3ed]" : "text-[#e9edf0]";
  return (
    <li className={`flex ${mine ? "justify-end" : "justify-start"} ${first ? "mt-[30px]" : "mt-2"}`}>
      <div className={`relative rounded-[34px] pt-[18px] pl-[30px] shadow-sm ${mine ? "pr-[26px]" : "pr-[22px]"} ${tone} ${corner} ${arrange}`}>
        {first && (
          <span className={mine ? "text-[#005d4b]" : "text-[#1f2b33]"}>
            <Tail mine={mine} />
          </span>
        )}
        {layout === "wide" ? (
          <div className={`text-5xl/[57px] ${ink}`}>
            <p>{text}</p>
            <div className="flex items-end justify-between">
              <p className="pb-[23px]">{lastLine}</p>
              <Stamp time={time} mine={mine} />
            </div>
          </div>
        ) : (
          <>
            <div className={`pb-[23px] text-5xl/[57px] ${ink} ${textGap}`}>
              {emoji ? (
                <p className="flex h-[81px] items-center whitespace-pre">
                  {text}
                  {Array.from({ length: count }, (_, i) => (
                    <Emoji key={i} name={emoji} />
                  ))}
                </p>
              ) : (
                <p>{text}</p>
              )}
            </div>
            <Stamp time={time} mine={mine} />
          </>
        )}
      </div>
    </li>
  );
}

export default function App() {
  return (
    <main className="relative min-h-screen overflow-hidden bg-[#071218] font-[Roboto,sans-serif]">
      <Wallpaper />
      <EmojiDefs />
      <div className="relative -mt-[95px] ml-12 h-[98px] w-[366px] rounded-[34px] bg-[#1f2b33]" />
      <ul className="relative">
        {messages.map((message, i) => (
          <Bubble key={i} message={message} />
        ))}
      </ul>
      <button
        type="button"
        aria-label="Scroll to latest message"
        className="fixed right-[35px] -bottom-[13px] flex size-24 items-center justify-center rounded-full bg-[#29333b] text-[#8797a3] shadow-md"
      >
        <svg className="h-[34px] w-9" viewBox="0 0 36 34" fill="none" stroke="currentColor" strokeWidth="4" aria-hidden="true">
          <path d="M1.500 2.500L18 15.500L34.500 2.500M1.500 18L18 31L34.500 18" />
        </svg>
      </button>
    </main>
  );
}
